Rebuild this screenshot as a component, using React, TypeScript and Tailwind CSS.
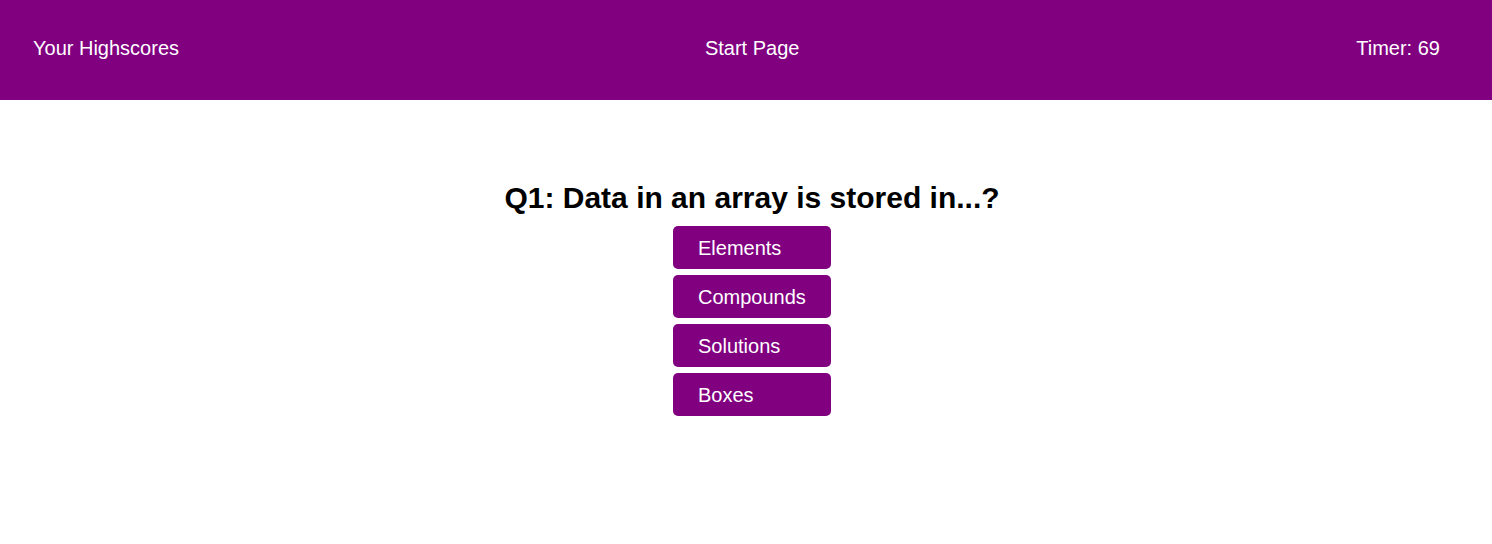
export default function App() {
  const answers = ["Elements", "Compounds", "Solutions", "Boxes"];
  return (
    <div className="min-h-[544px] bg-white" style={{ fontFamily: '"Liberation Sans", Arial, sans-serif' }}>
      <header className="flex h-[100px] items-center justify-between bg-[#800080] pb-[4px] pl-[33px] pr-[52px] text-[20px] text-white">
        <span>Your Highscores</span>
        <span className="mr-[31px]">Start Page</span>
        <span>Timer: 69</span>
      </header>
      <main className="flex flex-col items-center pl-[12px] pt-[80px]">
        <h1 className="text-[30px] font-bold leading-[36px] text-black">Q1: Data in an array is stored in...?</h1>
        <div className="mt-[10px] flex flex-col gap-[6px]">
          {answers.map((a) => (
            <button key={a} className="h-[43px] w-[158px] rounded-[5px] bg-[#800080] pl-[25px] text-left text-[20px] text-white">
              {a}
            </button>
          ))}
        </div>
      </main>
    </div>
  );
}
